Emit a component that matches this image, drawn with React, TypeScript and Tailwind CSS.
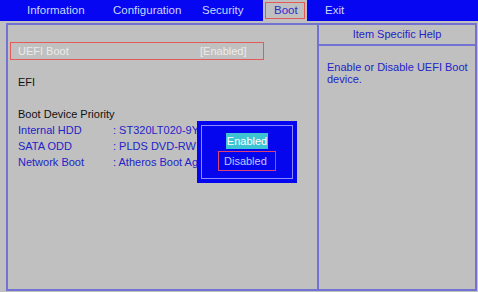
import React from 'react';

const menu = [
  { label: 'Information', w: 'w-[86px]' },
  { label: 'Configuration', w: 'w-[89px]' },
  { label: 'Security', w: 'w-[61px]' },
];

const devices = [
  { name: 'Internal HDD', value: ': ST320LT020-9YG142' },
  { name: 'SATA ODD', value: ': PLDS DVD-RW DA8A6SH' },
  { name: 'Network Boot', value: ': Atheros Boot Agent' },
];

export default function App() {
  return (
    <div className="w-[478px] h-[292px] bg-[#c0c0c0] relative overflow-hidden font-['Liberation_Sans',Arial,sans-serif] text-[11px] leading-none">
      {/* top menu bar */}
      <div className="h-[21px] bg-[#0606f2] flex items-stretch pl-[27px] text-[#c9d6ff]">
        {menu.map(m => (
          <div key={m.label} className={`${m.w} flex items-center text-[11.5px]`}>
            {m.label}
          </div>
        ))}
        <div className="w-[44px] bg-[#c0c0c0] flex items-center justify-center">
          <span className="w-[40px] h-[17px] border border-[#e25a5a] flex items-center pl-[8px] text-[11.5px] text-[#2b2bcc]">
            Boot
          </span>
        </div>
        <div className="ml-[18px] flex items-center text-[11.5px]">Exit</div>
      </div>

      {/* main frame */}
      <div className="ml-[6px] mt-[2px] w-[471px] h-[268px] border-2 border-[#7272d2] flex">
        <div className="w-[311px] border-r-2 border-[#7272d2] pt-[17px] pl-[2px]">
          <div className="w-[254px] h-[18px] border border-[#e25a5a] flex items-center pl-[7px] text-[#ececec]">
            <span className="w-[182px]">UEFI Boot</span>
            <span>[Enabled]</span>
          </div>
          <div className="pl-[8px] mt-[14px] h-[16px] flex items-center text-[#111]">EFI</div>
          <div className="pl-[8px] mt-[16px] h-[16px] flex items-center text-[#111]">Boot Device Priority</div>
          {devices.map(d => (
            <div key={d.name} className="pl-[8px] h-[16px] flex items-center text-[#2323c8] whitespace-nowrap">
              <span className="w-[95px]">{d.name}</span>
              <span className="w-[84px] overflow-hidden">{d.value}</span>
            </div>
          ))}
        </div>
        <div className="flex-1 flex flex-col">
          <div className="h-[21px] border-b-2 border-[#7272d2] flex items-center justify-center text-[#2323c8]">
            Item Specific Help
          </div>
          <div className="pl-[8px] pt-[15px] pr-[4px] text-[#2323c8] leading-[12px]">
            Enable or Disable UEFI Boot device.
          </div>
        </div>
      </div>

      {/* option popup */}
      <div className="absolute left-[197px] top-[121px] w-[100px] h-[62px] bg-[#0606ee] p-[4px]">
        <div className="w-full h-full border border-[#8c8cff] flex flex-col items-center pt-[7px]">
          <span className="h-[16px] px-[1px] bg-[#3cc4d2] text-white flex items-center">Enabled</span>
          <span className="mt-[2px] w-[58px] h-[20px] border border-[#e04070] text-[#c4c4ff] flex items-center pl-[5px]">
            Disabled
          </span>
        </div>
      </div>
    </div>
  );
}
